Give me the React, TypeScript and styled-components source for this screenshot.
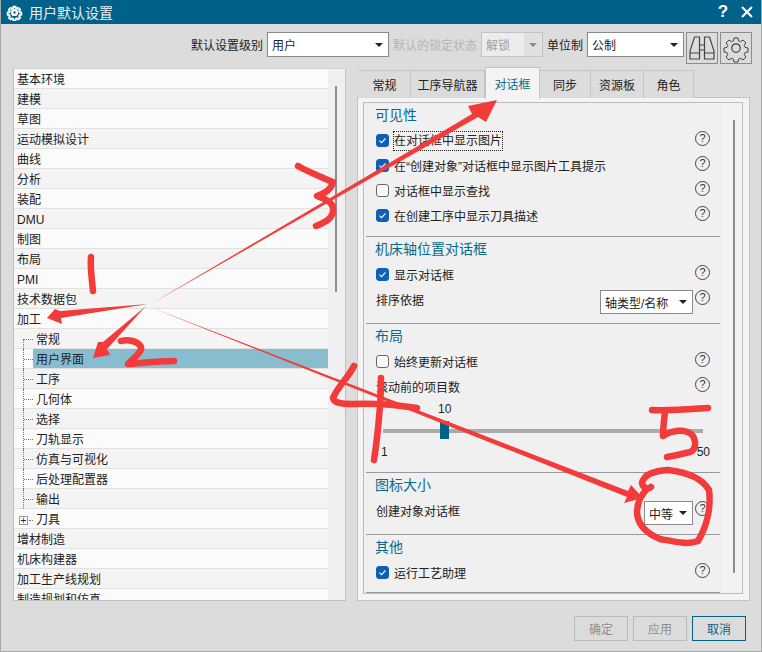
import { FC } from "react";
import styled, { createGlobalStyle } from "styled-components";

const Font = `"Liberation Sans", "Noto Sans CJK SC", sans-serif`;
const Accent = "#00618a";

const GlobalStyle = createGlobalStyle`
  html, body {
    margin: 0;
    padding: 0;
    background: #dcdcdc;
  }
  * {
    box-sizing: border-box;
  }
`;

const topItems = [
  "基本环境", "建模", "草图", "运动模拟设计", "曲线", "分析", "装配", "DMU",
  "制图", "布局", "PMI", "技术数据包", "加工",
];
const childItems = [
  "常规", "用户界面", "工序", "几何体", "选择", "刀轨显示", "仿真与可视化", "后处理配置器", "输出", "刀具",
];
const bottomItems = ["增材制造", "机床构建器", "加工生产线规划", "制造规划和仿真"];
const tabs = [
  { label: "常规", width: 52 },
  { label: "工序导航器", width: 74 },
  { label: "对话框", width: 55 },
  { label: "同步", width: 51 },
  { label: "资源板", width: 53 },
  { label: "角色", width: 50 },
];

const Check: FC<{ checked?: boolean }> = ({ checked }) => (
  <CheckBox $checked={checked}>
    {checked && (
      <svg width="9" height="9" viewBox="0 0 9 9" fill="none">
        <path d="M1.5 4.6 L3.6 6.7 L7.5 2.3" stroke="#fff" strokeWidth="1.1" />
      </svg>
    )}
  </CheckBox>
);

const Annotations = () => (
  <Overlay width="762" height="652" viewBox="0 0 762 652">
    <g fill="#f43b3b">
      {/* arrow 1 */}
      <polygon points="148,304 60,311 55,309 47,318 62,324 61,318" />
      {/* arrow 2 */}
      <polygon points="146,306 103,342 98,342 93,358 110,355 107,349" />
      {/* arrow 3 */}
      <polygon points="150,304.5 472,114 468,106 497,100 486,122 478,117" />
      {/* arrow 4 */}
      <polygon points="150,307 628,491 631,485 643,498 624,503 627,497" />
    </g>
    <g fill="none" stroke="#f43b3b" strokeLinecap="round" strokeLinejoin="round" strokeWidth="6.5">
      <path d="M91 257 C90 268 92 280 93 291" />
      <path d="M121 341 C128 339 138 341 141 347 C142 353 133 358 128 364 C142 363 160 361 174 361" />
      <path d="M298 166 C308 172 324 178 333 182 C331 190 325 193 317 196 C324 199 332 201 333 208 C334 218 326 222 316 226" />
      <path d="M354 366 C348 378 338 386 333 398 C334 403 342 404 352 404 C375 403 398 405 417 408" />
      <path d="M381 378 C381 400 378 430 376 446 L374 460" />
      <path d="M652 410 C670 411 692 409 708 408 M665 412 C664 420 663 428 663 436 C672 430 687 428 693 436 C697 444 695 450 690 452 C682 454 674 456 667 457" />
      <path d="M651 487 C648 490 643 488 642 483 C644 474 654 471 668 470 C685 472 702 478 709 490 C711 505 708 524 698 541 C688 545 676 542 660 539 C648 534 638 526 637 513 C637 503 641 495 647 489" />
    </g>
  </Overlay>
);

const Binoculars = () => (
  <svg width="26" height="24" viewBox="0 0 26 24" fill="none" stroke="#444" strokeWidth="1.2">
    <path d="M5.5 1 H10.5 V23 H1 V15 L5.5 1 Z M1 17 H10.5" />
    <path d="M15.5 1 H20.5 L25 15 V23 H15.5 Z M15.5 17 H25" />
    <path d="M10.5 9 H15.5 M10.5 14 H15.5" />
  </svg>
);

const Gear: FC<{ size: number; color: string; width: number }> = ({ size, color, width }) => (
  <svg width={size} height={size} viewBox="0 0 24 24" fill="none" stroke={color} strokeWidth={width}>
    <path d="M10 2 h4 l.6 2.9 2 .8 2.5-1.6 2.8 2.8-1.6 2.5.8 2 2.9.6 v4 l-2.9.6-.8 2 1.6 2.5-2.8 2.8-2.5-1.6-2 .8-.6 2.9 h-4 l-.6-2.9-2-.8-2.5 1.6-2.8-2.8 1.6-2.5-.8-2-2.9-.6 v-4 l2.9-.6.8-2-1.6-2.5 2.8-2.8 2.5 1.6 2-.8 z" transform="translate(2.4 2.4) scale(.8)" />
    <circle cx="12" cy="12" r="3.4" />
  </svg>
);

const App = () => {
  return (
    <>
      <GlobalStyle />
      <Window>
        <TitleBar>
          <Gear size={17} color="#fff" width={3.4} />
          <Title>用户默认设置</Title>
          <TitleButton>?</TitleButton>
          <TitleClose>
            <svg width="12" height="12" viewBox="0 0 12 12" stroke="#fff" strokeWidth="2">
              <path d="M1 1 L11 11 M11 1 L1 11" />
            </svg>
          </TitleClose>
        </TitleBar>

        <Toolbar>
          <ToolLabel>默认设置级别</ToolLabel>
          <Select $width={122} $height={25}>用户</Select>
          <ToolLabel $disabled>默认的锁定状态</ToolLabel>
          <Select $width={62} $height={25} $disabled>解锁</Select>
          <ToolLabel>单位制</ToolLabel>
          <Select $width={97} $height={25}>公制</Select>
          <IconButton><Binoculars /></IconButton>
          <IconButton><Gear size={30} color="#444" width={1} /></IconButton>
        </Toolbar>

        <Main>
          <Tree>
            <TreeList>
              {topItems.map((item, i) => (
                <TreeRow key={item} $odd={i % 2 === 1}>{item}</TreeRow>
              ))}
              {childItems.map((item, i) => (
                <ChildRow key={item} $odd={i % 2 === 0}>
                  {item === "刀具" ? <Expander>+</Expander> : <Branch $first={i === 0} />}
                  {item === "刀具" && <ExpanderLine />}
                  <ChildLabel $selected={item === "用户界面"}>{item}</ChildLabel>
                </ChildRow>
              ))}
              {bottomItems.map((item, i) => (
                <TreeRow key={item} $odd={i % 2 === 0}>{item}</TreeRow>
              ))}
            </TreeList>
            <TreeScroll>
              <TreeThumb />
            </TreeScroll>
          </Tree>

          <Settings>
            <TabBar>
              {tabs.map((tab) => (
                <Tab key={tab.label} $width={tab.width} $active={tab.label === "对话框"}>
                  {tab.label}
                </Tab>
              ))}
            </TabBar>
            <TabPanel>
              <Inner>
                <Sections>
                  <Section $height={134}>
                    <Heading>可见性</Heading>
                    <Row>
                      <Check checked />
                      <FocusLabel>在对话框中显示图片</FocusLabel>
                      <Help>?</Help>
                    </Row>
                    <Row>
                      <Check checked />
                      <RowLabel>在“创建对象”对话框中显示图片工具提示</RowLabel>
                      <Help>?</Help>
                    </Row>
                    <Row>
                      <Check />
                      <RowLabel>对话框中显示查找</RowLabel>
                      <Help>?</Help>
                    </Row>
                    <Row>
                      <Check checked />
                      <RowLabel>在创建工序中显示刀具描述</RowLabel>
                      <Help>?</Help>
                    </Row>
                  </Section>

                  <Section $height={87}>
                    <Heading>机床轴位置对话框</Heading>
                    <Row>
                      <Check checked />
                      <RowLabel>显示对话框</RowLabel>
                      <Help>?</Help>
                    </Row>
                    <Row>
                      <PlainLabel>排序依据</PlainLabel>
                      <RowSelect $width={93} $height={24}>轴类型/名称</RowSelect>
                      <Help>?</Help>
                    </Row>
                  </Section>

                  <Section $height={149}>
                    <Heading>布局</Heading>
                    <Row>
                      <Check />
                      <RowLabel>始终更新对话框</RowLabel>
                      <Help>?</Help>
                    </Row>
                    <Row>
                      <PlainLabel>滚动前的项目数</PlainLabel>
                      <Help>?</Help>
                    </Row>
                    <Slider>
                      <SliderValue>10</SliderValue>
                      <SliderTrack>
                        <SliderThumb />
                      </SliderTrack>
                      <SliderEnds>
                        <span>1</span>
                        <span>50</span>
                      </SliderEnds>
                    </Slider>
                  </Section>

                  <Section $height={62}>
                    <Heading>图标大小</Heading>
                    <Row>
                      <PlainLabel>创建对象对话框</PlainLabel>
                      <RowSelect $width={49} $height={24}>中等</RowSelect>
                      <Help>?</Help>
                    </Row>
                  </Section>

                  <Section $height={58}>
                    <Heading>其他</Heading>
                    <Row>
                      <Check checked />
                      <RowLabel>运行工艺助理</RowLabel>
                      <Help>?</Help>
                    </Row>
                  </Section>
                </Sections>
                <PanelScroll>
                  <PanelThumb />
                </PanelScroll>
              </Inner>
            </TabPanel>
          </Settings>
        </Main>

        <Footer>
          <FooterButton disabled>确定</FooterButton>
          <FooterButton disabled>应用</FooterButton>
          <FooterButton $primary>取消</FooterButton>
        </Footer>
        <Annotations />
      </Window>
    </>
  );
};

const Window = styled.div`
  position: relative;
  width: 762px;
  height: 652px;
  overflow: hidden;

  display: flex;
  flex-direction: column;

  background: #dcdcdc;
  border: 1px solid #a8a8a8;
  border-top: none;

  font-family: ${Font};
  font-size: 12px;
  color: #222;
`;

const TitleBar = styled.div`
  height: 24px;
  margin: 0 -1px;
  padding: 0 9px 0 6px;
  flex: none;

  display: flex;
  align-items: center;

  background: ${Accent};
  color: #fff;
`;

const Title = styled.div`
  margin-left: 6px;
  flex: 1;
  font-size: 14px;
  color: #e8f0f4;
`;

const TitleButton = styled.div`
  width: 12px;
  margin-right: 12px;
  font-size: 17px;
  font-weight: 700;
  text-align: center;
`;

const TitleClose = styled.div`
  display: flex;
`;

const Toolbar = styled.div`
  height: 39px;
  padding: 8px 9px 0 0;
  flex: none;

  display: flex;
  align-items: flex-start;
  justify-content: flex-end;
`;

const ToolLabel = styled.div<{ $disabled?: boolean }>`
  height: 25px;
  margin: 0 4px;
  line-height: 28px;
  white-space: nowrap;
  color: ${(p) => (p.$disabled ? "#b4b4b4" : "#222")};
`;

const Select = styled.div<{ $width: number; $height: number; $disabled?: boolean }>`
  position: relative;
  width: ${(p) => p.$width}px;
  height: ${(p) => p.$height}px;
  padding-left: 4px;
  flex: none;

  line-height: ${(p) => p.$height + 2}px;
  white-space: nowrap;
  color: ${(p) => (p.$disabled ? "#a0a0a0" : "#222")};

  background: ${(p) => (p.$disabled ? "linear-gradient(to right, #ececec 70%, #e0e0e0 70%)" : "#fff")};
  border: 1px solid ${(p) => (p.$disabled ? "#c4c4c4" : "#8a8a8a")};

  &::after {
    content: "";
    position: absolute;
    right: 5px;
    top: 50%;
    margin-top: -2px;
    border-left: 4px solid transparent;
    border-right: 4px solid transparent;
    border-top: 4px solid ${(p) => (p.$disabled ? "#8a8a8a" : "#222")};
  }
`;

const RowSelect = styled(Select)`
  margin-top: 5px;
`;

const IconButton = styled.div`
  width: 32px;
  height: 32px;
  margin-left: 2px;
  flex: none;

  display: flex;
  align-items: center;
  justify-content: center;

  border: 1px solid #8c8c8c;
`;

const Main = styled.div`
  height: 538px;
  padding: 5px 10px 0 12px;
  flex: none;

  display: flex;
  gap: 11px;
`;

const Tree = styled.div`
  width: 333px;
  height: 533px;
  flex: none;

  display: flex;

  background: #fff;
  border: 1px solid #c0c0c0;
  border-top-color: #d4d4d4;
  overflow: hidden;
`;

const TreeList = styled.div`
  flex: 1;
  overflow: hidden;
  background: #fff;
`;

const TreeRow = styled.div<{ $odd: boolean }>`
  height: 20px;
  padding-left: 3px;

  line-height: 23px;
  background: ${(p) => (p.$odd ? "#f4f4f4" : "#fbfbfb")};
  border-bottom: 1px solid #e2e2e2;
`;

const ChildRow = styled.div<{ $odd: boolean }>`
  position: relative;
  height: 20px;
  padding-left: 19px;

  display: flex;

  line-height: 23px;
  background: ${(p) => (p.$odd ? "#f4f4f4" : "#fbfbfb")};
  border-bottom: 1px solid #e2e2e2;
`;

const Branch = styled.span<{ $first: boolean }>`
  position: absolute;
  left: 9px;
  top: ${(p) => (p.$first ? 10 : 0)}px;
  width: 10px;
  height: ${(p) => (p.$first ? 10 : 20)}px;
  border-left: 1px dotted #777;

  &::after {
    content: "";
    position: absolute;
    left: 0;
    top: ${(p) => (p.$first ? 0 : 10)}px;
    width: 9px;
    border-top: 1px dotted #777;
  }
`;

const Expander = styled.span`
  position: absolute;
  left: 5px;
  top: 7px;
  width: 9px;
  height: 9px;

  display: flex;
  align-items: center;
  justify-content: center;

  font-size: 10px;
  line-height: 9px;
  background: #fff;
  border: 1px solid #999;
`;

const ExpanderLine = styled.span`
  position: absolute;
  left: 15px;
  top: 11px;
  width: 4px;
  border-top: 1px dotted #777;
`;

const ChildLabel = styled.div<{ $selected: boolean }>`
  flex: 1;
  height: 19px;
  padding-left: 3px;
  background: ${(p) => (p.$selected ? "#88bdd0" : "transparent")};
`;

const TreeScroll = styled.div`
  width: 17px;
  flex: none;
  background: #f0f0f0;
`;

const TreeThumb = styled.div`
  width: 2px;
  height: 206px;
  margin: 17px 0 0 7px;
  background: #8e8e8e;
`;

const Settings = styled.div`
  width: 393px;
  flex: none;
  display: flex;
  flex-direction: column;
`;

const TabBar = styled.div`
  height: 29px;
  padding-left: 2px;
  flex: none;
  display: flex;
  position: relative;
  z-index: 1;
`;

const Tab = styled.div<{ $width: number; $active: boolean }>`
  width: ${(p) => p.$width}px;
  height: ${(p) => (p.$active ? 32 : 28)}px;
  margin-top: ${(p) => (p.$active ? -1 : 2)}px;

  line-height: ${(p) => (p.$active ? 35 : 30)}px;
  text-align: center;
  color: ${(p) => (p.$active ? "#0a6a8c" : "#222")};

  background: ${(p) => (p.$active ? "#f4f4f4" : "#dcdcdc")};
  border: 1px solid #c4c4c4;
  border-bottom: none;
  border-left-width: ${(p) => (p.$active ? 1 : 0)}px;
`;

const TabPanel = styled.div`
  height: 504px;
  padding: 4px 6px 6px 5px;
  background: #f4f4f4;
  border: 1px solid #c4c4c4;
`;

const Inner = styled.div`
  height: 492px;
  display: flex;
  background: #f0f0f0;
  border: 1px solid #bcbcbc;
`;

const Sections = styled.div`
  width: 361px;
  padding: 0 4px 0 2px;
  flex: none;
  border-right: 1px solid #fafafa;
`;

const Section = styled.section<{ $height: number }>`
  height: ${(p) => p.$height}px;
  border-bottom: 1px solid #999;
`;

const Heading = styled.div`
  height: 25px;
  padding-left: 9px;
  line-height: 25px;
  font-size: 14px;
  color: #0a6a8c;
`;

const Row = styled.div`
  height: 25px;
  padding-left: 10px;
  padding-right: 10px;

  display: flex;
  align-items: center;
`;

const CheckBox = styled.span<{ $checked?: boolean }>`
  width: 13px;
  height: 13px;
  flex: none;

  display: flex;
  align-items: center;
  justify-content: center;

  background: ${(p) => (p.$checked ? "#0f5fb5" : "#f8f8f8")};
  border: 1px solid ${(p) => (p.$checked ? "#0f5fb5" : "#6a6a6a")};
  border-radius: 3px;
`;

const RowLabel = styled.div`
  flex: 1;
  margin-left: 5px;
  white-space: nowrap;
`;

const FocusLabel = styled(RowLabel)`
  flex: none;
  margin-left: 4px;
  margin-right: auto;
  padding: 0 1px;
  height: 20px;
  line-height: 21px;
  outline: 1px dotted #222;
  outline-offset: -1px;
`;

const PlainLabel = styled.div`
  flex: 1;
  white-space: nowrap;
`;

const Help = styled.span`
  width: 15px;
  height: 15px;
  margin: 0 0 5px 2px;
  flex: none;

  display: flex;
  align-items: center;
  justify-content: center;

  font-size: 11px;
  color: #333;
  border: 1px solid #444;
  border-radius: 50%;
`;

const Slider = styled.div`
  padding: 0 17px;
`;

const SliderValue = styled.div`
  height: 20px;
  margin-left: 55px;
  line-height: 20px;
`;

const SliderTrack = styled.div`
  position: relative;
  height: 4px;
  margin-top: 10px;
  background: #aaa;
`;

const SliderThumb = styled.div`
  position: absolute;
  left: 57px;
  top: -8px;
  width: 9px;
  height: 18px;
  background: ${Accent};
`;

const SliderEnds = styled.div`
  margin: 11px -7px 0 -2px;
  display: flex;
  justify-content: space-between;
  line-height: 16px;
`;

const PanelScroll = styled.div`
  flex: 1;
  background: #f2f2f2;
`;

const PanelThumb = styled.div`
  width: 2px;
  height: 453px;
  margin: 17px 0 0 8px;
  background: #8e8e8e;
`;

const Footer = styled.div`
  padding: 15px 15px 0 0;
  display: flex;
  justify-content: flex-end;
  gap: 5px;
`;

const FooterButton = styled.button<{ $primary?: boolean }>`
  width: 54px;
  height: 25px;
  padding: 0;

  font-family: ${Font};
  font-size: 12px;
  color: ${(p) => (p.$primary ? "#0a5f82" : "#8e8e8e")};

  background: #dcdcdc;
  border: 1px solid ${(p) => (p.$primary ? Accent : "#bcbcbc")};
`;

const Overlay = styled.svg`
  position: absolute;
  left: -1px;
  top: 0;
  pointer-events: none;
`;

export default App;
